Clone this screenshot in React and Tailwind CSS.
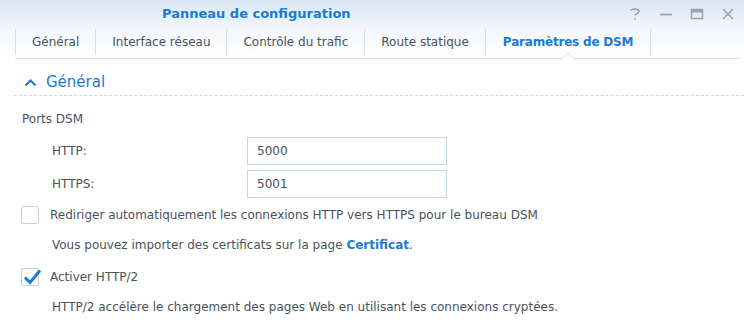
import React from 'react';

const tabs = ['Général', 'Interface réseau', 'Contrôle du trafic', 'Route statique', 'Paramètres de DSM'];

function Checkbox({ checked }) {
  return <div className="relative w-[18px] h-[18px] border border-[#c5cfd9] bg-white rounded-[2px] shrink-0">
      {checked && <svg className="absolute left-[1px] top-[-1px]" width="19" height="17" viewBox="0 0 19 17">
          <path d="M2 9.5 L7 14.5 L17 2.5" fill="none" stroke="#1a7fd6" strokeWidth="3" strokeLinejoin="miter" />
        </svg>}
    </div>;
}

export default function App() {
  return <div className="w-[744px] h-[325px] bg-white overflow-hidden text-[12px] text-[#4a525b]" style={{ fontFamily: '"DejaVu Sans", Verdana, sans-serif' }}>
      <div className="bg-gradient-to-b from-[#d8e6f5] via-[#f3f7fc] to-white">
        <div className="h-[28px] flex items-center relative">
          <div className="pl-[162px] text-[13px] font-bold text-[#1b7bd0]">Panneau de configuration</div>
          <div className="ml-auto flex items-center gap-[17px] pr-[9px] text-[#9aa4ad]">
            <svg width="14" height="14" viewBox="0 0 14 14"><path d="M3 3.5 C3 1.5 11 1.5 11 4.5 C11 6.8 7 6.5 7 8.5 M7 11 L7 12.5" fill="none" stroke="#9aa4ad" strokeWidth="1.6" /></svg>
            <svg width="14" height="14" viewBox="0 0 14 14"><path d="M1 7.5 L13 7.5" stroke="#9aa4ad" strokeWidth="1.8" /></svg>
            <svg width="14" height="14" viewBox="0 0 14 14"><rect x="1.5" y="2.5" width="11" height="9" fill="none" stroke="#9aa4ad" strokeWidth="1.5" /><path d="M1.5 4 L12.5 4" stroke="#9aa4ad" strokeWidth="3" /></svg>
            <svg width="14" height="14" viewBox="0 0 14 14"><path d="M2 2 L12 12 M12 2 L2 12" stroke="#9aa4ad" strokeWidth="1.5" /></svg>
          </div>
        </div>
        <div className="ml-[15px] mr-[4px] h-[31px] border-b border-[#dde2e7] flex relative">
          {tabs.map((t, i) => {
            const active = i === tabs.length - 1;
            return <div key={t} className={`relative h-[26px] mt-[1px] flex items-center border-l border-[#d9dfe5] ${active ? 'px-[17px] border-r font-bold text-[#1b7bd0] tracking-[-0.2px]' : 'px-[16px]'}`}>
                {t}
                {active && <div className="absolute left-1/2 -translate-x-1/2 bottom-[-5px] w-[14px] h-[8px]">
                    <svg width="14" height="8" viewBox="0 0 14 8"><path d="M0 8 L7 1 L14 8" fill="white" stroke="#dde2e7" strokeWidth="1" /></svg>
                  </div>}
              </div>;
          })}
        </div>
      </div>
      <div className="mt-[11px] ml-[14px] h-[26px] border-b border-dashed border-[#c9d9e8] flex items-center">
        <svg className="ml-[10px]" width="13" height="9" viewBox="0 0 13 9"><path d="M1.5 7.5 L6.5 2.5 L11.5 7.5" fill="none" stroke="#1b7bd0" strokeWidth="2" /></svg>
        <span className="ml-[9px] text-[15px] text-[#1b7bd0]">Général</span>
      </div>
      <div className="pl-[22px] pt-[15px]">
        <div className="h-[16px] leading-[16px]">Ports DSM</div>
        <div className="mt-[10px] flex flex-col gap-[5px]">
          <div className="flex items-center h-[28px]">
            <span className="pl-[30px] w-[225px]">HTTP:</span>
            <div className="w-[200px] h-[28px] border border-[#c7d5e2] flex items-center pl-[9px]">5000</div>
          </div>
          <div className="flex items-center h-[28px]">
            <span className="pl-[30px] w-[225px]">HTTPS:</span>
            <div className="w-[200px] h-[28px] border border-[#c7d5e2] flex items-center pl-[9px]">5001</div>
          </div>
        </div>
        <div className="mt-[8px] flex items-center h-[18px] -ml-[1px]">
          <Checkbox />
          <span className="ml-[11px]">Rediriger automatiquement les connexions HTTP vers HTTPS pour le bureau DSM</span>
        </div>
        <div className="mt-[12px] pl-[30px] h-[18px] flex items-center">
          Vous pouvez importer des certificats sur la page&nbsp;<span className="font-bold text-[#1b7bd0]">Certificat</span>.
        </div>
        <div className="mt-[14px] flex items-center h-[18px] -ml-[1px]">
          <Checkbox checked />
          <span className="ml-[11px]">Activer HTTP/2</span>
        </div>
        <div className="mt-[12px] pl-[30px] h-[18px] flex items-center">
          HTTP/2 accélère le chargement des pages Web en utilisant les connexions cryptées.
        </div>
      </div>
    </div>;
}
